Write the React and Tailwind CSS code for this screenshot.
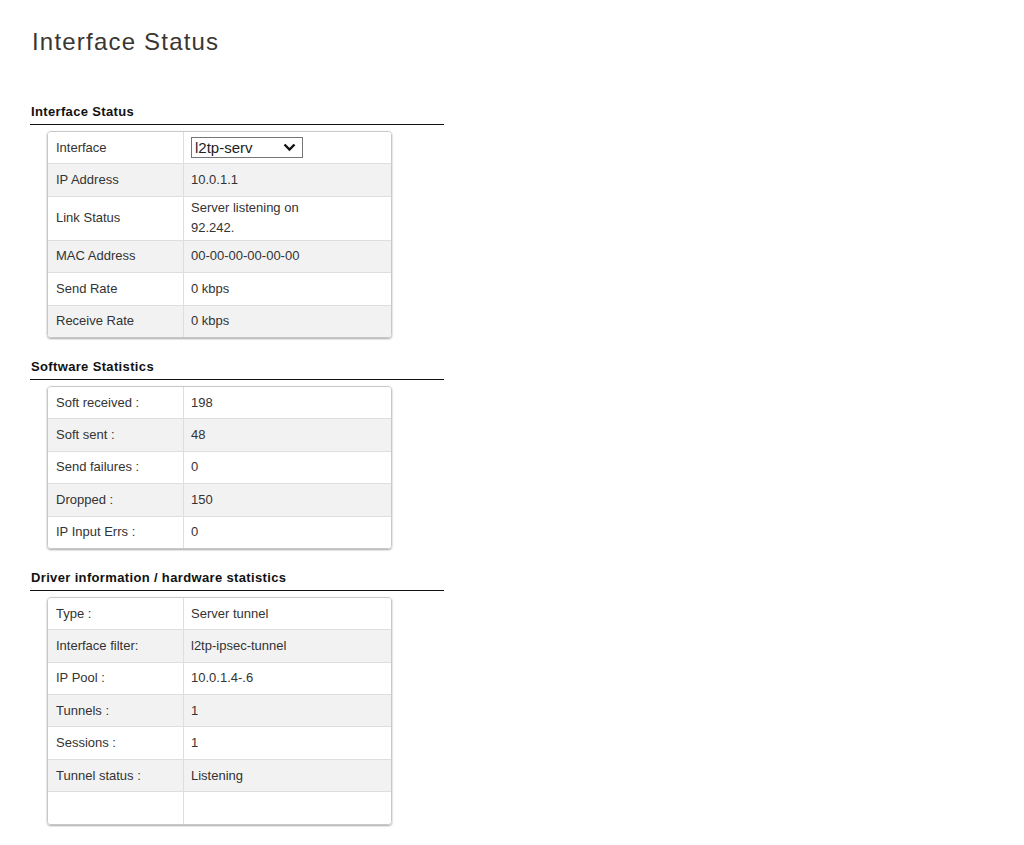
const sections = [
  {
    title: "Interface Status",
    rows: [
      { label: "Interface", select: "l2tp-serv" },
      { label: "IP Address", value: "10.0.1.1" },
      { label: "Link Status", value: ["Server listening on", "92.242."] },
      { label: "MAC Address", value: "00-00-00-00-00-00" },
      { label: "Send Rate", value: "0 kbps" },
      { label: "Receive Rate", value: "0 kbps" },
    ],
  },
  {
    title: "Software Statistics",
    rows: [
      { label: "Soft received :", value: "198" },
      { label: "Soft sent :", value: "48" },
      { label: "Send failures :", value: "0" },
      { label: "Dropped :", value: "150" },
      { label: "IP Input Errs :", value: "0" },
    ],
  },
  {
    title: "Driver information / hardware statistics",
    rows: [
      { label: "Type :", value: "Server tunnel" },
      { label: "Interface filter:", value: "l2tp-ipsec-tunnel" },
      { label: "IP Pool :", value: "10.0.1.4-.6" },
      { label: "Tunnels :", value: "1" },
      { label: "Sessions :", value: "1" },
      { label: "Tunnel status :", value: "Listening" },
      { label: "", value: "" },
    ],
  },
];

const Row = ({ row, index, last }) => {
  const multi = Array.isArray(row.value);
  return (
    <div
      className={
        "flex " +
        (index % 2 === 1 ? "bg-[#f2f2f2] " : "bg-white ") +
        (last ? "" : "border-b border-[#dedede]")
      }
    >
      <div className="w-[136px] shrink-0 border-r border-[#dedede] pl-2 flex items-center">
        <span className="leading-5">{row.label}</span>
      </div>
      <div
        className={
          "flex-1 pl-[7px] flex items-center " +
          (multi ? "h-[43px]" : "h-[31.4px]")
        }
      >
        {row.select ? (
          <div className="w-[112px] h-[21px] border border-[#767676] bg-white flex items-center justify-between pl-[3px] pr-[6px] text-[15px] text-[#222]">
            <span className="leading-none">{row.select}</span>
            <svg width="13" height="9" viewBox="0 0 13 9">
              <path d="M1.5 1.5 L6.5 6.5 L11.5 1.5" fill="none" stroke="#111" strokeWidth="2.4" />
            </svg>
          </div>
        ) : multi ? (
          <div className="leading-5">
            {row.value.map((v) => (
              <div key={v}>{v}</div>
            ))}
          </div>
        ) : (
          <span className="leading-5">{row.value}</span>
        )}
      </div>
    </div>
  );
};

const Section = ({ section }) => (
  <div className="mb-[21px]">
    <div className="w-[414px] border-b border-[#111] pl-px pb-[4px] text-[13px] font-bold tracking-[0.35px] text-[#111] leading-4">
      {section.title}
    </div>
    <div className="ml-[17px] mt-[6px] w-[345px] border border-[#c8c8c8] rounded-[4px] shadow-[0_1px_2px_rgba(0,0,0,0.35)] overflow-hidden">
      {section.rows.map((row, i) => (
        <Row key={i} row={row} index={i} last={i === section.rows.length - 1} />
      ))}
    </div>
  </div>
);

export default function App() {
  return (
    <div
      className="min-h-[845px] bg-white pl-[30px] text-[13px] text-[#333]"
      style={{ fontFamily: '"Liberation Sans", Arial, sans-serif' }}
    >
      <h1 className="pt-[28px] pl-[2px] text-[24px] leading-7 tracking-[1.2px] text-[#3a3632] font-normal">
        Interface Status
      </h1>
      <div className="mt-[48px]">
        {sections.map((s) => (
          <Section key={s.title} section={s} />
        ))}
      </div>
    </div>
  );
}
